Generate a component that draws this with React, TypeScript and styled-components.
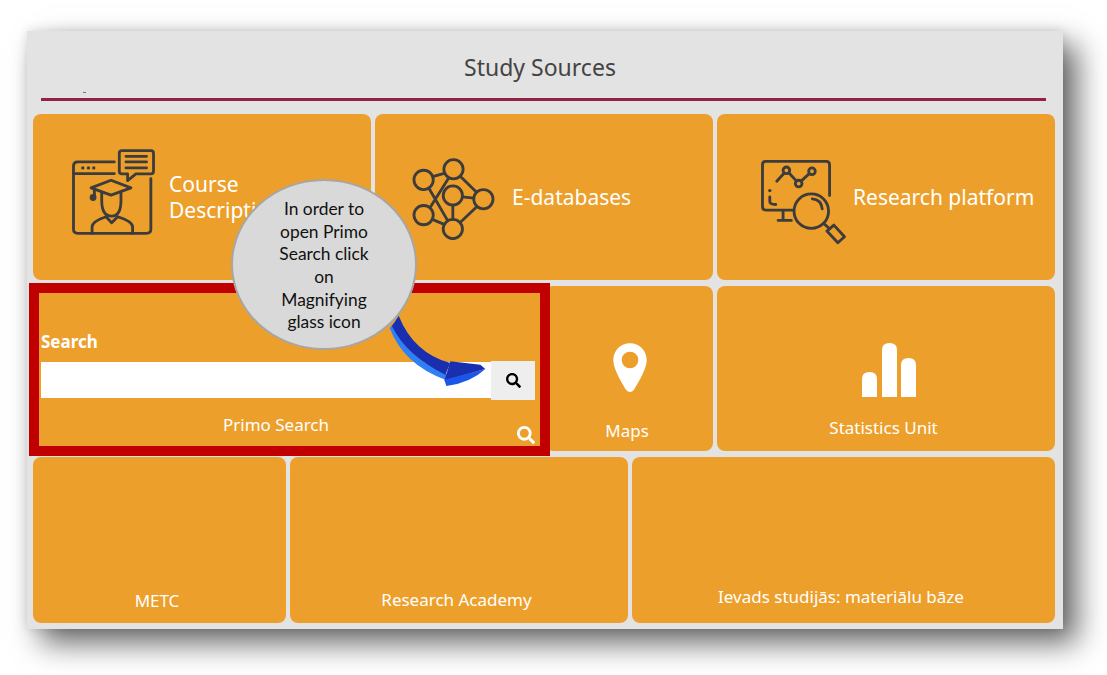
import styled, { createGlobalStyle } from 'styled-components';
import { FaSearch } from 'react-icons/fa';

const GlobalStyle = createGlobalStyle`
  html, body {
    margin: 0;
    padding: 0;
    background: #ffffff;
    overflow: hidden;
  }
  body {
    font-family: 'Noto Sans', 'Open Sans', sans-serif;
  }
`;

const Page = styled.div`
  width: 1107px;
  height: 675px;
  padding: 31px 0 0 27px;
  box-sizing: border-box;
`;

const Panel = styled.div`
  position: relative;
  display: flex;
  flex-direction: column;
  gap: 6px;
  width: 1036px;
  height: 598px;
  box-sizing: border-box;
  padding: 0 8px 6px 6px;
  background: #e3e3e3;
  box-shadow: 14px 14px 28px rgba(0, 0, 0, 0.6), 0 0 10px rgba(0, 0, 0, 0.12);
`;

const Header = styled.header`
  display: flex;
  flex-direction: column;
  height: 77px;
  padding: 0 9px 0 8px;
`;

const Title = styled.h1`
  margin: 0;
  padding: 19px 7px 0 0;
  font-size: 23px;
  font-weight: 400;
  line-height: 34px;
  text-align: center;
  color: #444444;
`;

const Speck = styled.span`
  width: 3px;
  height: 1px;
  margin: 8px 0 5px 42px;
  background: #77777a;
`;

const Rule = styled.div`
  height: 3px;
  background: #93214a;
`;

const Row = styled.div<{ $columns: string; $height: number }>`
  display: grid;
  grid-template-columns: ${(p) => p.$columns};
  gap: 4px;
  height: ${(p) => p.$height}px;
`;

const Tile = styled.a`
  display: flex;
  align-items: center;
  border-radius: 8px;
  background: #ed9f2c;
  color: #ffffff;
`;

const IconTile = styled(Tile)<{ $left: number; $gap: number }>`
  padding-left: ${(p) => p.$left}px;
  gap: ${(p) => p.$gap}px;
`;

const IconFrame = styled.div<{ $top: number }>`
  display: flex;
  margin-top: ${(p) => p.$top}px;
`;

const TileHeading = styled.span`
  font-size: 21px;
  line-height: 26px;
`;

const StackTile = styled(Tile)<{ $bottom: number; $right: number }>`
  flex-direction: column;
  justify-content: flex-end;
  padding: 0 ${(p) => p.$right}px ${(p) => p.$bottom}px 0;
`;

const TileLabel = styled.span`
  font-size: 17px;
  line-height: 22px;
`;

const StackIcon = styled.svg<{ $bottom: number; $left: number }>`
  display: block;
  margin: 0 0 ${(p) => p.$bottom}px ${(p) => p.$left}px;
`;

const SearchTile = styled(Tile)`
  position: relative;
  flex-direction: column;
  align-items: stretch;
  justify-content: flex-end;
  padding: 0 6px 15px 8px;
`;

const SearchLabel = styled.label`
  margin-bottom: 8px;
  font-size: 17px;
  font-weight: 700;
  line-height: 22px;
`;

const SearchBar = styled.div`
  display: flex;
  align-items: center;
  height: 39px;
  margin-bottom: 14px;
`;

const SearchField = styled.input`
  flex: 1;
  min-width: 0;
  height: 36px;
  margin-bottom: 2px;
  padding: 0;
  border: 0;
  background: #ffffff;
`;

const SearchButton = styled.button`
  display: flex;
  align-items: center;
  justify-content: center;
  width: 44px;
  height: 39px;
  padding: 0;
  border: 0;
  background: #eeeeee;
  color: #000000;
  font-size: 15px;
`;

const SearchCaption = styled(TileLabel)`
  padding-right: 24px;
  text-align: center;
`;

const CornerIcon = styled.span`
  position: absolute;
  right: 6px;
  bottom: 7px;
  display: flex;
  font-size: 18px;
  color: #ffffff;
`;

const HighlightFrame = styled.div`
  position: absolute;
  left: 2px;
  top: 252px;
  width: 521px;
  height: 173px;
  box-sizing: border-box;
  border: 10px solid #c00000;
  pointer-events: none;
`;

const Arrow = styled.svg`
  position: absolute;
  left: 360px;
  top: 282px;
`;

const Callout = styled.div`
  position: absolute;
  left: 204px;
  top: 148px;
  display: flex;
  align-items: center;
  justify-content: center;
  width: 186px;
  height: 171px;
  box-sizing: border-box;
  padding-top: 3px;
  border: 2px solid #a6a6a6;
  border-radius: 50%;
  background: #d9d9d9;
  font-family: 'Lato', sans-serif;
  font-size: 17.400px;
  line-height: 22.7px;
  text-align: center;
  color: #111111;
`;

const CourseIcon = () => (
  <svg width="85" height="88" viewBox="125 115 255 265" fill="none" stroke="#3c3c3c" strokeWidth="8.500" strokeLinecap="round" strokeLinejoin="round">
    <path d="M255 157H145Q132 157 132 170V360Q132 372 145 372H352Q365 372 365 360V207" />
    <path d="M132 192H255" />
    <path d="M160 175h.1M177 175h.1M193 175h.1" strokeWidth="10" />
    <path d="M278 123H365Q373 123 373 131V185Q373 193 365 193H320L295 213V193H278Q270 193 270 185V131Q270 123 278 123Z" />
    <path d="M290 140H352M290 157H352M290 175H352" />
    <path d="M185 235L245 212L305 235L245 257Z" />
    <path d="M195 238V260" />
    <circle cx="191" cy="264" r="6" fill="#3c3c3c" />
    <path d="M217 250V272Q217 320 247 320Q275 320 275 272V250" />
    <path d="M188 372V352Q188 336 230 322L247 340L265 322Q310 336 310 352V372" />
  </svg>
);

const NetworkIcon = () => (
  <svg width="83" height="82" viewBox="95 85 250 245" fill="none" stroke="#3c3c3c" strokeWidth="8.500" strokeLinecap="round">
    <circle cx="130" cy="150" r="29" />
    <circle cx="220" cy="118" r="29" />
    <circle cx="218" cy="197" r="29" />
    <circle cx="310" cy="208" r="29" />
    <circle cx="130" cy="256" r="29" />
    <circle cx="218" cy="298" r="29" />
    <path d="M157 140L192 130M146 175L202 272M205 145L150 232M241 140L288 186M247 201L281 205M218 226V269M156 269L192 284M290 231L240 278" />
  </svg>
);

const ResearchIcon = () => (
  <svg width="90" height="88" viewBox="55 55 270 265" fill="none" stroke="#3c3c3c" strokeWidth="8.500" strokeLinecap="round" strokeLinejoin="round">
    <path d="M270 168V75Q270 65 260 65H78Q68 65 68 75V200Q68 212 78 212H160" />
    <path d="M90 172V186Q90 195 108 195" />
    <path d="M90 153h.1" strokeWidth="10" />
    <path d="M130 215V243M115 243H155" />
    <path d="M111 125L133 101M148 100L170 124M185 124L209 102" />
    <circle cx="140" cy="92" r="10" />
    <circle cx="177" cy="132" r="10" />
    <circle cx="217" cy="95" r="10" />
    <circle cx="215" cy="215" r="52" />
    <path d="M218 178Q245 180 248 208" />
    <path d="M252 252L270 268" />
    <path d="M262 275L283 257L315 292L295 310Z" />
  </svg>
);

const PinIcon = () => (
  <StackIcon as="svg" $bottom={25} $left={6} width="40" height="55" viewBox="60 35 120 165">
    <path
      fillRule="evenodd"
      fill="#ffffff"
      d="M120 45C92 45 70 67 70 95C70 125 100 170 108 184Q120 198 132 184C140 170 170 125 170 95C170 67 148 45 120 45ZM120 70A25 25 0 1 1 120 120A25 25 0 1 1 120 70Z"
    />
  </StackIcon>
);

const BarsIcon = () => (
  <StackIcon as="svg" $bottom={19} $left={10} width="56" height="56" viewBox="0 0 56 56" fill="#ffffff">
    <path d="M1 55V37Q1 30 8.500 30Q16 30 16 37V55Z" />
    <path d="M21 55V8Q21 1 28.500 1Q36 1 36 8V55Z" />
    <path d="M40 55V23Q40 16 47.500 16Q55 16 55 23V55Z" />
  </StackIcon>
);

const ArrowDrawing = () => (
  <Arrow width="100" height="75" viewBox="50 40 300 225">
    <path fill="#2f80f5" d="M58 85Q100 195 225 240L230 222Q110 180 72 68Z" />
    <path fill="#1a2fb0" d="M85 48L65 80Q110 170 225 225L240 190Q130 160 85 48Z" />
    <path fill="#1a2fb0" d="M240 185L330 195L345 208L222 243Z" />
    <path fill="#1a56e8" d="M345 208Q300 250 228 259L222 240Z" />
  </Arrow>
);

const App = () => (
  <Page>
    <GlobalStyle />
    <Panel>
      <Header>
        <Title>Study Sources</Title>
        <Speck />
        <Rule />
      </Header>
      <Row $columns="338px 338px 338px" $height={166}>
        <IconTile $left={38} $gap={13}>
          <IconFrame $top={-10}>
            <CourseIcon />
          </IconFrame>
          <TileHeading>
            Course
            <br />
            Description
          </TileHeading>
        </IconTile>
        <IconTile $left={37} $gap={17}>
          <IconFrame $top={4}>
            <NetworkIcon />
          </IconFrame>
          <TileHeading>E-databases</TileHeading>
        </IconTile>
        <IconTile $left={41} $gap={5}>
          <IconFrame $top={10}>
            <ResearchIcon />
          </IconFrame>
          <TileHeading>Research platform</TileHeading>
        </IconTile>
      </Row>
      <Row $columns="508px 168px 338px" $height={165}>
        <SearchTile>
          <SearchLabel>Search</SearchLabel>
          <SearchBar>
            <SearchField />
            <SearchButton>
              <FaSearch />
            </SearchButton>
          </SearchBar>
          <SearchCaption>Primo Search</SearchCaption>
          <CornerIcon>
            <FaSearch />
          </CornerIcon>
        </SearchTile>
        <StackTile $bottom={9} $right={4}>
          <PinIcon />
          <TileLabel>Maps</TileLabel>
        </StackTile>
        <StackTile $bottom={12} $right={5}>
          <BarsIcon />
          <TileLabel>Statistics Unit</TileLabel>
        </StackTile>
      </Row>
      <Row $columns="253px 338px 423px" $height={166}>
        <StackTile $bottom={11} $right={5}>
          <TileLabel>METC</TileLabel>
        </StackTile>
        <StackTile $bottom={12} $right={5}>
          <TileLabel>Research Academy</TileLabel>
        </StackTile>
        <StackTile $bottom={15} $right={5}>
          <TileLabel>Ievads studijās: materiālu bāze</TileLabel>
        </StackTile>
      </Row>
      <HighlightFrame />
      <ArrowDrawing />
      <Callout>
        <span>
          In order to
          <br />
          open Primo
          <br />
          Search click
          <br />
          on
          <br />
          Magnifying
          <br />
          glass icon
        </span>
      </Callout>
    </Panel>
  </Page>
);

export default App;
